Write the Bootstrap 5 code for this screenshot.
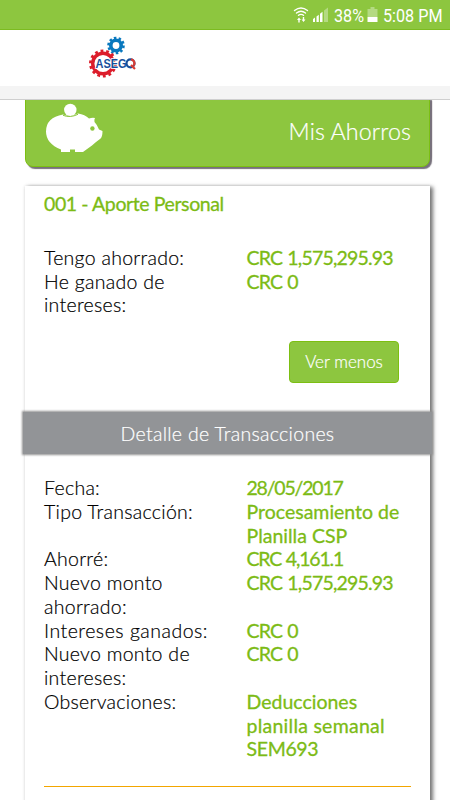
<!DOCTYPE html>
<html lang="es">
<head>
<meta charset="utf-8">
<meta name="viewport" content="width=device-width, initial-scale=1">
<title>Mis Ahorros</title>
<link rel="stylesheet" href="https://cdn.jsdelivr.net/npm/bootstrap@5.3.0/dist/css/bootstrap.min.css">
<style>
body{font-family:Lato,"Open Sans",sans-serif;font-weight:300;font-size:19.5px;line-height:23.73px;color:#000;background:#fff;height:800px;overflow:hidden}
.status{height:30px;background:#8dc63f;border-bottom:1px solid #7cbb20}
.brand-bar{height:56px}
.strip{height:14px;background:#f4f4f4;border-bottom:1px solid #cfcfcf}
.savings-head{height:68px;margin:-1px 20px 0 25px;width:405px;background:#8dc63f;border:1px solid #7cbf12;border-radius:0 0 8px 8px;box-shadow:2px 2px 1px #77717c,2px -3px 1px #8c8890;clip-path:inset(1px -6px -6px 0)}
.savings-head h1{font-size:23.3px;font-weight:300;letter-spacing:.1px;padding:0 18px 3px 0;-webkit-text-stroke:.2px #fff}
.panel{width:405px;height:640px;margin:19px 0 0 25px;background:#fff;box-shadow:3px 1px 4px 0 #747474,0 0 3px #ddd}
.panel h2{font-size:19.5px;line-height:24px;padding:6px 19px 0;margin-bottom:30px;letter-spacing:-.4px}
.panel .col-6{padding:0 0 0 19px;white-space:nowrap}
.val{color:#7cbb15;font-weight:400;-webkit-text-stroke:.3px #7cbb15}
.lab{letter-spacing:.28px;-webkit-text-stroke:.2px #000}
.wide{letter-spacing:.5px}
.money{letter-spacing:-.82px;word-spacing:1px}
.tight{letter-spacing:-1.2px;word-spacing:1px}
.zero{letter-spacing:-.85px;word-spacing:1px}
.soft{letter-spacing:.25px}
.code{letter-spacing:-.35px}
.btn-less{width:110px;height:42px;margin:24px 31px 0 0;background:#8dc63f;border:1px solid #7cbf12;color:#fff;font-size:17px;font-weight:300;border-radius:4px;padding:0;letter-spacing:0;-webkit-text-stroke:.2px #fff}
.section-bar{height:42px;margin:29px 0 22px -2px;width:409px;background:#929497;color:#fff;box-shadow:0 0 2px 1px #929292;padding-top:2px;letter-spacing:.3px;-webkit-text-stroke:.2px #fff}
.divider{border-top:1px solid #f3a600;opacity:1;margin:25px 19px 0}
</style>
<script src="https://cdn.jsdelivr.net/npm/bootstrap@5.3.0/dist/js/bootstrap.bundle.min.js"></script>
</head>
<body>
<div class="status">
<svg class="d-block" width="450" height="29" viewBox="0 0 450 29" fill="none">
  <g stroke="#fff" stroke-width="1.4" stroke-linecap="round">
    <path d="M294.5 10.5Q301 5.5 307.500 10.500M296.500 13Q301 9.500 305.500 13M298.500 15.300Q301 13.500 303.500 15.300"/>
  </g>
  <path fill="#fff" d="M297 20l2-2.500 2 2.500h-1.300v2.500h-1.400V20zM301.500 19.500h1.300V17h1.400v2.500h1.300l-2 2.500z"/>
  <path fill="#fff" fill-opacity=".35" d="M324 10.500l4-3V22h-4z"/>
  <path fill="#fff" d="M313 19l2-1.500V22h-2zM316.500 16.500l2.300-1.700V22h-2.300zM320 13.700l2.500-2V22H320z"/>
  <path fill="#fff" fill-opacity=".35" d="M367.500 9h3V7h4v2h3v8h-10z"/>
  <path fill="#fff" d="M367.500 17h10v5h-10z"/>
  <g fill="#fff" font-family="Roboto,sans-serif" font-size="19" font-weight="400">
    <text x="334" y="22" textLength="30" lengthAdjust="spacingAndGlyphs">38%</text>
    <text x="383" y="22" textLength="59.500" lengthAdjust="spacingAndGlyphs">5:08 PM</text>
  </g>
</svg>
</div>
<header class="brand-bar">
<svg class="d-block" width="150" height="56" viewBox="0 30 150 56" fill="none">
  <circle cx="116" cy="45.500" r="5.200" stroke="#0878be" stroke-width="3.600"/>
  <circle cx="116" cy="45.500" r="7.500" stroke="#0878be" stroke-width="2.600" stroke-dasharray="2.500 2.212"/>
  <circle cx="103" cy="63.500" r="10.300" stroke="#dc1d2b" stroke-width="3.400"/>
  <circle cx="103" cy="63.500" r="12.600" stroke="#dc1d2b" stroke-width="2.800" stroke-dasharray="2.800 2.855"/>
  <text x="95.500" y="68" fill="#174f9b" stroke="#fff" stroke-width="1.600" paint-order="stroke" font-family="Liberation Sans,sans-serif" font-size="13.500" font-weight="700" textLength="31" lengthAdjust="spacingAndGlyphs">ASEG</text>
  <circle cx="130.500" cy="63.300" r="4" stroke="#174f9b" stroke-width="2.200"/>
  <path stroke="#dc3c32" stroke-width="2.200" d="M131 59.300a4 4 0 0 1 2.600 6.400M131 65l4 4"/>
</svg>
</header>
<div class="strip"></div>
<section class="savings-head d-flex align-items-center justify-content-between">
<svg width="82" height="64" viewBox="26 101.500 82 64">
  <g fill="#fff"><circle cx="70.300" cy="110.400" r="6.200"/>
  <path d="M63 115Q70 118 78 114Q85 115 89 119Q92 118 95 118.500Q94 120 94.500 122.500Q97 125 99 130L102.500 131.500Q102.500 138 100 139.500Q95 143 92 146Q86 150 83 152.500H75V150H70V152.500H61V150Q46 144 46 132Q46 118 63 115z"/></g>
  <path d="M63 115.800Q70 118.700 78 114.800" stroke="#8dc63f" fill="none"/>
  <circle cx="92.400" cy="129" r="2.200" fill="#8dc63f"/>
</svg>
<h1 class="text-white mb-0">Mis Ahorros</h1>
</section>
<main class="panel">
<h2 class="val">001 - Aporte Personal</h2>
<div class="row g-0">
  <div class="col-6 lab">Tengo ahorrado:</div><div class="col-6 val money">CRC 1,575,295.93</div>
  <div class="col-6 lab">He ganado de<br>intereses:</div><div class="col-6 val zero">CRC 0</div>
</div>
<div class="d-flex justify-content-end"><button class="btn btn-less" type="button">Ver menos</button></div>
<div class="section-bar d-flex align-items-center justify-content-center">Detalle de Transacciones</div>
<div class="row g-0">
  <div class="col-6 lab">Fecha:</div><div class="col-6 val tight">28/05/2017</div>
  <div class="col-6 lab">Tipo Transacción:</div><div class="col-6 val">Procesamiento de<br>Planilla CSP</div>
  <div class="col-6 lab">Ahorré:</div><div class="col-6 val tight">CRC 4,161.1</div>
  <div class="col-6 lab">Nuevo monto<br>ahorrado:</div><div class="col-6 val money">CRC 1,575,295.93</div>
  <div class="col-6 lab wide">Intereses ganados:</div><div class="col-6 val zero">CRC 0</div>
  <div class="col-6 lab">Nuevo monto de<br>intereses:</div><div class="col-6 val zero">CRC 0</div>
  <div class="col-6 lab">Observaciones:</div><div class="col-6 val">Deducciones<br><span class="soft">planilla semanal</span><br><span class="code">SEM693</span></div>
</div>
<hr class="divider">
</main>
</body>
</html>
